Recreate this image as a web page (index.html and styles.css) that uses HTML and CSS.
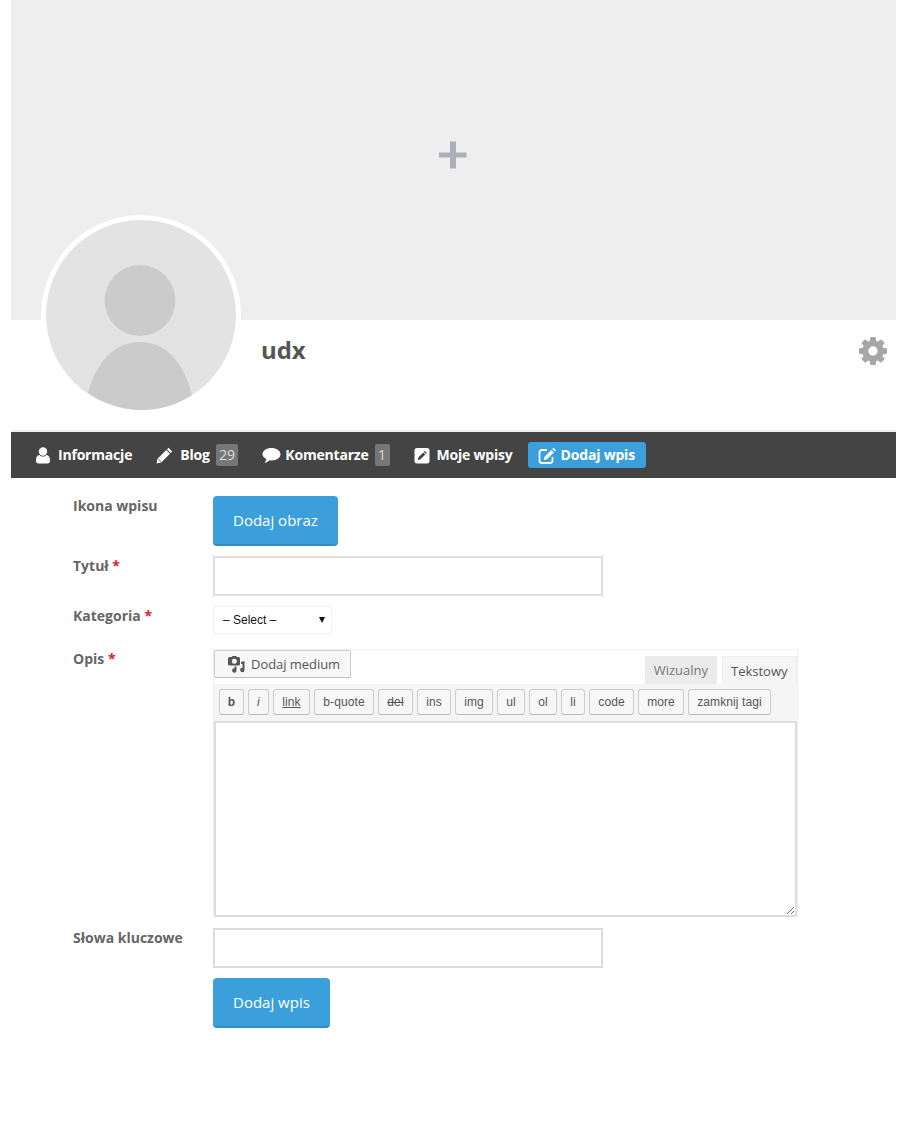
FILE: index.html
```html
<!DOCTYPE html>
<html lang="pl">
<head>
<meta charset="utf-8">
<title>Dodaj wpis</title>
<link rel="stylesheet" href="styles.css">
</head>
<body>
<div class="page">
  <header class="profile">
    <div class="cover">
      <svg class="plus" width="30" height="30" viewBox="0 0 30 30"><path d="M12 1.500h6v11h10.500v5h-10.500v11h-6v-11h-11v-5h11z" fill="#abb0b8"/></svg>
    </div>
    <div class="avatar">
      <svg width="190" height="190" viewBox="0 0 190 190"><circle cx="95" cy="95" r="95" fill="#e3e3e3"/><circle cx="94" cy="80.500" r="35.500" fill="#cbcbcb"/><path d="M42 173C50 143 68 122 94 122S138 143 146 175C131 185 114 190 95 190S57 183 42 173Z" fill="#cbcbcb"/></svg>
    </div>
    <div class="identity">
      <h1 class="username">udx</h1>
      <svg class="gear" width="28" height="28" viewBox="0 0 1536 1536"><path fill="#a6a6a6" d="M1024 768q0-106-75-181t-181-75-181 75-75 181 75 181 181 75 181-75 75-181zm512-109v222q0 12-8 23t-20 13l-185 28q-19 54-39 91 35 50 107 138 10 12 10 25t-9 23q-27 37-99 108t-94 71q-12 0-26-9l-138-108q-44 23-91 38-16 136-29 186-7 28-36 28h-222q-14 0-24.500-8.500t-11.500-21.500l-28-184q-49-16-90-37l-141 107q-10 9-25 9-14 0-25-11-126-114-165-168-7-10-7-23 0-12 8-23 15-21 51-66.500t54-70.500q-27-50-41-99l-183-27q-13-2-21-12.500t-8-23.500v-222q0-12 8-23t19-13l186-28q14-46 39-92-40-57-107-138-10-12-10-24 0-10 9-23 26-36 98.500-107.500t94.500-71.500q13 0 26 10l138 107q44-23 91-38 16-136 29-186 7-28 36-28h222q14 0 24.500 8.500t11.500 21.500l28 184q49 16 90 37l142-107q9-9 24-9 13 0 25 10 129 119 165 170 7 8 7 22 0 12-8 23-15 21-51 66.500t-54 70.500q26 50 41 98l183 28q13 2 21 12.500t8 23.500z"/></svg>
    </div>
  </header>

  <nav class="tabs">
    <a class="tab">
      <svg class="ico" width="16" height="17" viewBox="0 0 16 17"><circle cx="8" cy="4.500" r="4.200" fill="#fff"/><path d="M1 12.500C1 9.500 3 8 4.500 8 5.500 9 6.700 9.500 8 9.500S10.500 9 11.500 8C13 8 15 9.500 15 12.500V14C15 15.500 14 16.500 12.500 16.500h-9C2 16.500 1 15.500 1 14Z" fill="#fff"/></svg>
      Informacje
    </a>
    <a class="tab">
      <svg class="ico" width="17" height="17" viewBox="0 0 17 17"><path d="M12.500.8 16.200 4.500 14.700 6 11 2.300ZM10.300 3 14 6.700 5.200 15.500.5 16.500 1.500 11.800Z" fill="#fff"/><path d="M2.300 12 5 14.700" stroke="#444" stroke-width=".8" fill="none"/></svg>
      Blog <span class="count">29</span>
    </a>
    <a class="tab">
      <svg class="ico ico-tight" width="19" height="17" viewBox="0 0 19 17"><path d="M9.500 1C14.500 1 18.500 3.700 18.500 7.200S14.500 13.400 9.500 13.400C8.800 13.400 8.100 13.300 7.500 13.200 6.300 14.400 4.500 15.500 2.500 15.700 3.500 14.600 4.200 13.300 4.300 12 2 10.900.5 9.200.5 7.200.5 3.700 4.500 1 9.500 1Z" fill="#fff"/></svg>
      Komentarze <span class="count">1</span>
    </a>
    <a class="tab tab-last">
      <svg class="ico" width="16" height="17" viewBox="0 0 16 17"><path fill-rule="evenodd" d="M3 1h10A2.500 2.500 0 0 1 15.500 3.500v10.500A2.500 2.500 0 0 1 13 16.500H3A2.500 2.500 0 0 1 .5 14V3.500A2.500 2.500 0 0 1 3 1ZM10.800 4 12.800 6 11.900 6.900 9.900 4.900ZM9.300 5.500 11.300 7.500 6.200 12.600 3.900 13.100 4.300 10.500Z" fill="#fff"/></svg>
      Moje wpisy
    </a>
    <a class="tab tab-active">
      <svg class="ico ico-tight" width="19" height="17" viewBox="0 0 19 17"><path d="M9 3H4A2.500 2.500 0 0 0 1.500 5.500v8A2.500 2.500 0 0 0 4 16h8a2.500 2.500 0 0 0 2.500-2.500V10" fill="none" stroke="#fff" stroke-width="1.800"/><path d="M15.500.8 18 3.300 16.800 4.500 14.300 2ZM13.400 2.900 15.900 5.400 9 12.300 6 13 6.500 9.800Z" fill="#fff"/></svg>
      Dodaj wpis
    </a>
  </nav>

  <form class="form">
    <div class="row">
      <label class="label">Ikona wpisu</label>
      <button type="button" class="btn">Dodaj obraz</button>
    </div>
    <div class="row">
      <label class="label">Tytuł <span class="req">*</span></label>
      <input class="field" type="text">
    </div>
    <div class="row row-select">
      <label class="label">Kategoria <span class="req">*</span></label>
      <div class="select"><span>– Select –</span><i class="caret"></i></div>
    </div>
    <div class="row row-editor">
      <label class="label">Opis <span class="req">*</span></label>
      <div class="editor">
        <div class="editor-top">
          <button type="button" class="media">
            <svg width="18" height="17" viewBox="0 0 18 17"><path fill-rule="evenodd" d="M2.500 1h2L5.500 0h3.500l1 1h1.500a1.500 1.500 0 0 1 1.500 1.500v5.500a1.500 1.500 0 0 1-1.500 1.500h-9A1.500 1.500 0 0 1 1 8V2.500A1.500 1.500 0 0 1 2.500 1Zm4.800 1.700a2.500 2.500 0 1 0 0 5 2.500 2.500 0 0 0 0-5Z" fill="#555"/><path d="M14 6 17.500 5V14A2.200 2.200 0 1 1 15.500 11.800V7.700L14 8.100Z" fill="#555"/><path d="M9.500 10.500V14.500A2.200 2.200 0 1 1 7.500 12.300V10.500Z" fill="#555"/></svg>
            Dodaj medium
          </button>
          <div class="modes">
            <span class="mode">Wizualny</span>
            <span class="mode mode-on">Tekstowy</span>
          </div>
        </div>
        <div class="quicktags">
          <span class="qt qt-b">b</span>
          <span class="qt qt-i">i</span>
          <span class="qt qt-link">link</span>
          <span class="qt">b-quote</span>
          <span class="qt qt-del">del</span>
          <span class="qt">ins</span>
          <span class="qt">img</span>
          <span class="qt">ul</span>
          <span class="qt">ol</span>
          <span class="qt">li</span>
          <span class="qt">code</span>
          <span class="qt">more</span>
          <span class="qt">zamknij tagi</span>
        </div>
        <textarea class="content"></textarea>
      </div>
    </div>
    <div class="row">
      <label class="label">Słowa kluczowe</label>
      <input class="field" type="text">
    </div>
    <div class="row">
      <span class="label"></span>
      <button type="button" class="btn">Dodaj wpis</button>
    </div>
  </form>
</div>
</body>
</html>
```
FILE: styles.css
```css
* { box-sizing: border-box; }
html, body { margin: 0; padding: 0; background: #fff; }
body { font-family: "Open Sans", sans-serif; color: #555; height: 1122px; overflow: hidden; }
.page { width: 885px; margin-left: 11px; }

.profile { position: relative; height: 430px; }
.cover { height: 320px; background: #eee; display: flex; align-items: center; justify-content: center; padding: 0 1px 10px 0; }
.plus { display: block; }
.avatar { position: absolute; left: 30px; top: 215px; width: 200px; height: 200px; border-radius: 50%; background: #fff; padding: 5px; }
.avatar svg { display: block; }
.identity { display: flex; align-items: center; justify-content: space-between; padding: 14px 9px 0 250px; }
.username { margin: -1px 0 1px; font-size: 24px; line-height: 33px; font-weight: 700; color: #555; letter-spacing: -.1px; }
.gear { display: block; }

.tabs { height: 48px; border-top: 2px solid #eee; background: #444; display: flex; align-items: center; padding: 0 0 0 17px; }
.tab { display: flex; align-items: center; height: 26px; padding: 0 7px 2px; margin-right: 10px; border-radius: 3px; color: #fff; font-size: 14px; font-weight: 700; letter-spacing: -.2px; white-space: nowrap; }
.ico { display: block; margin: 2px 7px 0 0; flex: none; }
.ico-tight { margin-right: 4px; }
.count { display: inline-block; margin: 2px 0 0 6px; padding: 0 3.5px; height: 22px; min-width: 15px; line-height: 22px; border-radius: 2px; background: #777; color: #ddd; font-size: 14px; font-weight: 400; text-align: center; }
.tab-last { margin-right: 8px; }
.tab-active { background: #3a9fdb; margin-right: 0; padding: 0 11px 2px 10px; }

.form { padding: 18px 0 0 62px; }
.row { display: flex; align-items: flex-start; margin-bottom: 10px; }
.row-select { margin-bottom: 0; }
.row-editor { margin-bottom: 11px; margin-top: 15px; }
.label { flex: none; width: 140px; font-size: 14px; font-weight: 700; line-height: 20px; color: #666; }
.req { color: #e0202c; }
.btn { height: 50px; padding: 0 20px; border: 0; border-bottom: 2px solid #2f8cc4; border-radius: 4px; background: #3a9fdb; color: #fff; font-family: "Open Sans", sans-serif; font-size: 15px; line-height: 48px; }
.field { display: block; width: 390px; height: 40px; border: 2px solid #ddd; background: #fff; }
.select { width: 119px; height: 28px; border: 1px solid #f2f2f2; border-radius: 3px; display: flex; align-items: center; justify-content: space-between; padding: 0 6px 0 9px; font-family: "Liberation Sans", sans-serif; font-size: 12px; color: #111; }
.caret { width: 0; height: 0; border-left: 3px solid transparent; border-right: 3px solid transparent; border-top: 6px solid #111; }

.editor { width: 585px; height: 268px; border: 1px solid #f0f0f0; border-bottom: 0; display: flex; flex-direction: column; }
.editor-top { height: 34px; display: flex; justify-content: space-between; align-items: flex-end; }
.media { display: flex; align-items: center; height: 28px; width: 137px; margin: 0 0 6px 0; padding: 0 0 0 12px; border: 1px solid #ccc; border-bottom-color: #bbb; border-radius: 2px; background: #f7f7f7; color: #555; font-family: "Open Sans", sans-serif; font-size: 13px; letter-spacing: -.05px; }
.media svg { margin-right: 6px; }
.modes { display: flex; align-items: flex-end; }
.mode { height: 28px; line-height: 28px; padding: 0 9px; margin-right: 5px; background: #ebebeb; color: #777; font-size: 13px; }
.mode-on { margin-right: 0; background: #f5f5f5; border: 1px solid #eee; border-bottom: 0; color: #555; padding: 0 8px; width: 75px; }
.quicktags { height: 37px; background: #f5f5f5; display: grid; grid-template-columns: 25px 21px 37px 60px 35px 34px 38px 28px 28px 24px 45px 46px 83px; column-gap: 4px; align-items: start; padding: 5px 0 0 5px; }
.qt { height: 26px; line-height: 24px; border: 1px solid #ccc; border-bottom-color: #bbb; border-radius: 3px; background: #f7f7f7; color: #555; font-family: "Liberation Sans", sans-serif; font-size: 12px; letter-spacing: .1px; text-align: center; white-space: nowrap; }
.qt-b { font-weight: 700; }
.qt-i { font-style: italic; }
.qt-link { text-decoration: underline; }
.qt-del { text-decoration: line-through; }
.content { display: block; width: 100%; height: 196px; border: 2px solid #ddd; margin: 0; padding: 0; background: #fff; outline: 0; resize: vertical; }
```
